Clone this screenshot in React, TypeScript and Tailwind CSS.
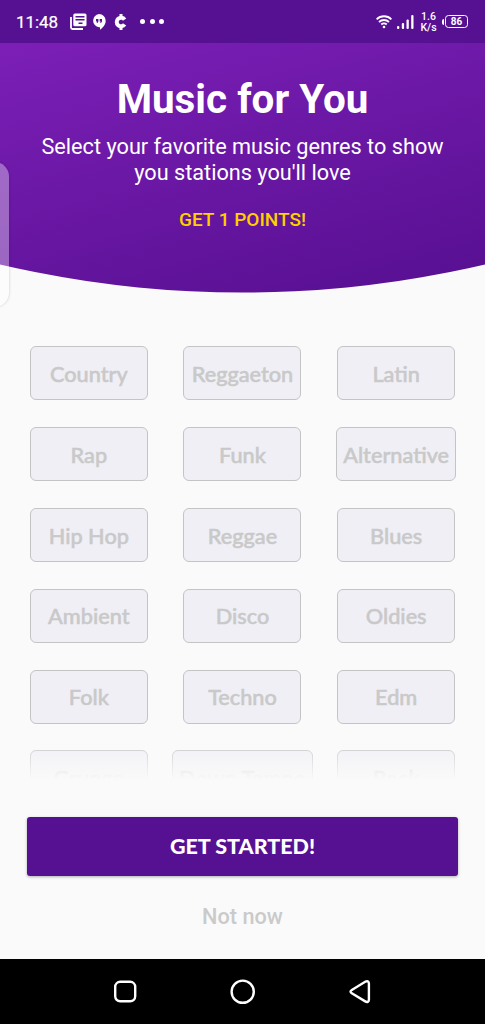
const genres = [
    'Country', 'Reggaeton', 'Latin',
    'Rap', 'Funk', 'Alternative',
    'Hip Hop', 'Reggae', 'Blues',
    'Ambient', 'Disco', 'Oldies',
    'Folk', 'Techno', 'Edm',
    'Grunge', 'Down Tempo', 'Rock'
]

const StatusBar = () => (
    <div className="flex h-[43px] shrink-0 items-center justify-between bg-[#561092] pl-4 pr-[17px] text-white">
        <div className="flex items-center">
            <span className="w-[54px] pt-px text-[17px] leading-none tracking-[-0.1px] [-webkit-text-stroke:0.2px_white]">11:48</span>
            <svg className="h-[17px] w-[17px]" viewBox="0 0 17 17" fill="none">
                <path d="M1 4v10.500c0 .8.7 1.500 1.500 1.500H13" stroke="white" strokeWidth="1.800" />
                <rect x="3.300" y="0.500" width="13.200" height="12.800" rx="1.500" fill="white" />
                <path d="M5.500 3.800h9M5.500 6.800h9M8.500 10.200h4" stroke="#561092" strokeWidth="1.400" />
            </svg>
            <svg className="ml-[5px] h-4 w-[14px]" viewBox="0 0 14 16" fill="none">
                <path d="M7 0a6.700 6.700 0 0 1 6.700 6.800c0 4-2.800 7.100-5.700 8.900v-2.400H7A6.700 6.700 0 0 1 7 0z" fill="white" />
                <path d="M4 5h2.400v2.400L5.400 9H4.600l.6-1.600H4zM7.700 5H10v2.400L9 9h-.8l.6-1.600H7.700z" fill="#561092" />
            </svg>
            <svg className="ml-[8px] h-4 w-[13px]" viewBox="0 0 13 16" fill="none" stroke="white">
                <path d="M10.600 5.600A4.300 4.300 0 1 0 10.600 10.400" strokeWidth="4" />
                <path d="M7 0v4M7 12v4" strokeWidth="3" />
            </svg>
            <div className="ml-[13px] flex gap-[4.500px]">
                <span className="h-[5px] w-[5px] rounded-full bg-white" />
                <span className="h-[5px] w-[5px] rounded-full bg-white" />
                <span className="h-[5px] w-[5px] rounded-full bg-white" />
            </div>
        </div>
        <div className="flex items-center">
            <svg className="h-[14px] w-4" viewBox="0 0 16 14" fill="none" stroke="white" strokeWidth="1.800">
                <path d="M.6 4.300C4.700.2 11.300.2 15.400 4.300M3 7c2.800-2.700 7.200-2.700 10 0M5.300 9.500c1.500-1.500 3.900-1.500 5.400 0" />
                <circle cx="8" cy="12" r="1.300" fill="white" stroke="none" />
            </svg>
            <svg className="ml-[5px] h-[14px] w-[17px]" viewBox="0 0 17 14" fill="white">
                <rect x="0" y="11" width="2.300" height="3" rx="1" />
                <rect x="4.800" y="8" width="2.300" height="6" rx="1" />
                <rect x="9.500" y="4.500" width="2.300" height="9.500" rx="1" />
                <rect x="14.200" y="0" width="2.300" height="14" rx="1" />
            </svg>
            <div className="ml-[6px] w-[17px] text-center text-[10.500px] font-medium leading-[11px]">
                <div>1.6</div>
                <div>K/s</div>
            </div>
            <span className="ml-[5px] h-[6px] w-[2px] rounded-l bg-white" />
            <div className="ml-[1px] flex h-[13px] w-[23px] items-center justify-center rounded-[3.500px] border-[1.500px] border-white text-[10px] font-bold leading-none">
                86
            </div>
        </div>
    </div>
)

const NavBar = () => (
    <div className="flex h-[65px] shrink-0 items-center justify-between bg-black px-[112px]">
        <svg className="h-[26px] w-[26px]" viewBox="0 0 26 26" fill="none" stroke="white" strokeWidth="2.400">
            <rect x="3.200" y="2.800" width="20" height="19.500" rx="5" />
        </svg>
        <svg className="h-[26px] w-[26px]" viewBox="0 0 26 26" fill="none" stroke="white" strokeWidth="2.400">
            <circle cx="12.700" cy="12.700" r="11.100" />
        </svg>
        <svg className="h-[26px] w-[26px]" viewBox="0 0 26 26" fill="none" stroke="white" strokeWidth="2.400">
            <path d="M4.800 11 18.200 2.800c2-1.200 3.700-.5 3.700 1.600v16.400c0 2.100-1.700 2.800-3.700 1.600L4.800 14.200c-1.700-1-1.700-2.200 0-3.200z" />
        </svg>
    </div>
)

const App = () => {
    return (
        <div className="relative flex h-[1024px] w-full flex-col overflow-hidden bg-[#fafafa] font-[Roboto,sans-serif]">
            <StatusBar />

            {/* Header with curved bottom edge */}
            <header className="h-[250px] shrink-0 bg-linear-[165deg] from-[#7c1fb7] to-[#560f90] pt-[33px] text-center text-white [clip-path:circle(1064px_at_50%_-814.5px)]">
                <h1 className="text-[40.400px] font-bold leading-[48px]">Music for You</h1>
                <p className="mt-[10px] text-[21.700px] leading-[26px]">
                    Select your favorite music genres to show
                    <br />
                    you stations you'll love
                </p>
                <p className="mt-[22px] text-[19px] font-medium leading-[24px] text-[#ffd000]">GET 1 POINTS!</p>
            </header>

            {/* Genres */}
            <div className="relative mt-[53px] h-[434px] shrink-0 overflow-hidden px-[12px]">
                <div className="grid grid-cols-3 gap-y-[26.900px]">
                    {genres.map((genre) => (
                        <div key={genre} className="flex justify-center">
                            <button className="h-[54px] min-w-[118px] whitespace-nowrap rounded-[6px] border-[1.500px] border-[#c4c4c4] bg-[#f0eff5] px-[6px] pt-[2px] font-[Lato,sans-serif] text-[21.700px] font-medium text-[#c9c9c9] [-webkit-text-stroke:0.5px_#c9c9c9]">
                                {genre}
                            </button>
                        </div>
                    ))}
                </div>
                <div className="absolute inset-x-0 bottom-0 h-[42px] bg-linear-to-t from-[#fafafa] to-[#fafafa]/0" />
            </div>

            {/* Actions */}
            <div className="mt-[37px] flex flex-col items-center px-[27px]">
                <button className="h-[59px] w-full rounded-[3px] bg-[#561092] font-[Lato,sans-serif] text-[21.500px] font-black text-white shadow-[0_1px_3px_rgba(0,0,0,0.3)]">
                    GET STARTED!
                </button>
                <button className="mt-[28px] text-[21.700px] font-medium leading-[26px] text-[#cacaca]">Not now</button>
            </div>

            <div className="mt-auto">
                <NavBar />
            </div>

            {/* Edge panel handle */}
            <div className="absolute -left-5 top-[162px] h-[145px] w-[29px] rounded-[20px] bg-white/35 shadow-[0_0_3px_rgba(0,0,0,0.2)]" />
        </div>
    )
}

export default App
